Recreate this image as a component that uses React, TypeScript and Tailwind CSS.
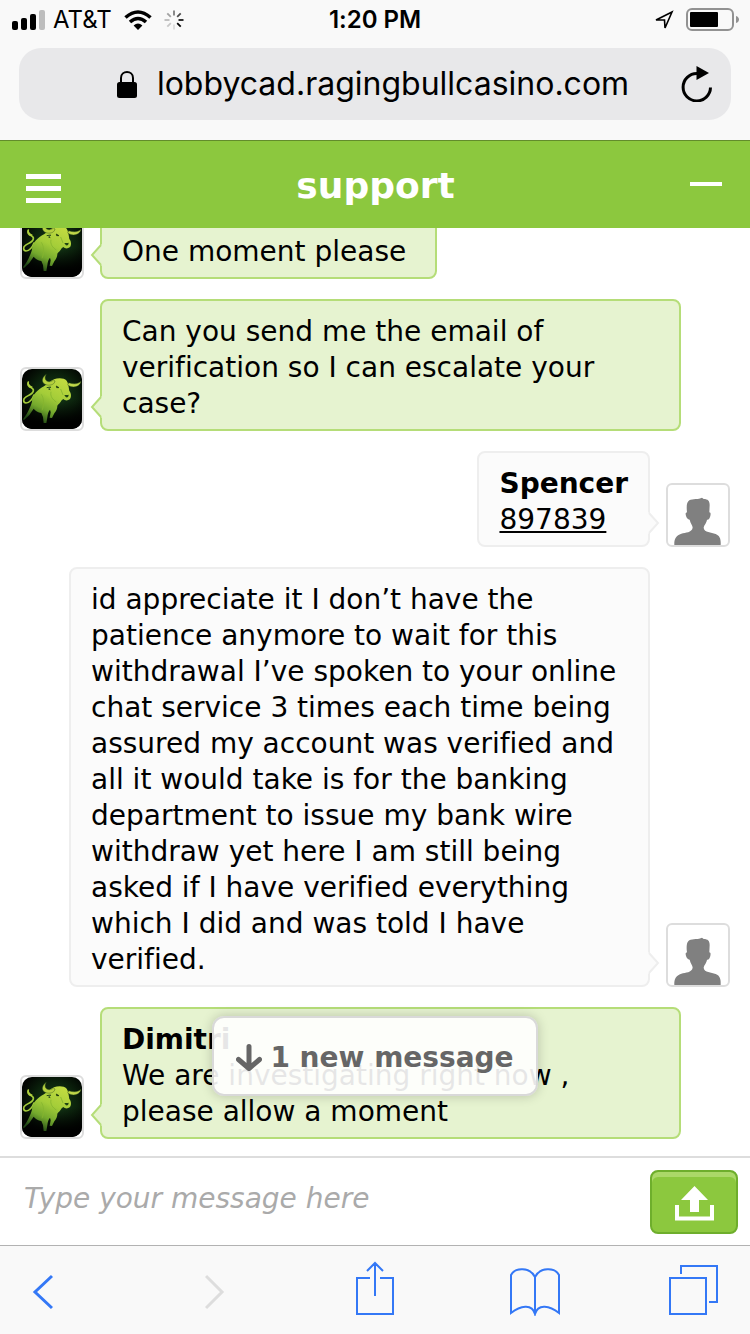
import type { ReactNode } from 'react';

function BullAvatar() {
  return (
    <div className="size-16 shrink-0 rounded-md border-2 border-[#dddddd] bg-white">
      <svg viewBox="0 0 180 180" className="block size-full" role="img" aria-label="Agent">
        <defs>
          <radialGradient id="bg" cx="0.55" cy="0.45" r="0.6">
            <stop offset="0" stopColor="#17401a" />
            <stop offset="0.6" stopColor="#0b220c" />
            <stop offset="1" stopColor="#020502" />
          </radialGradient>
          <linearGradient id="floor" x1="0" y1="0" x2="0" y2="1">
            <stop offset="0.5" stopColor="#000" stopOpacity="0" />
            <stop offset="0.9" stopColor="#000" stopOpacity="1" />
          </linearGradient>
          <linearGradient id="hide" gradientUnits="userSpaceOnUse" x1="110" y1="30" x2="50" y2="160">
            <stop offset="0" stopColor="#c0da40" />
            <stop offset="0.4" stopColor="#a4cd39" />
            <stop offset="0.7" stopColor="#74a92d" />
            <stop offset="1" stopColor="#1d4414" />
          </linearGradient>
        </defs>
        <rect width="180" height="180" rx="30" fill="url(#bg)" />
        <rect width="180" height="180" rx="30" fill="url(#floor)" />
        <path
          d="M36 78C32 90 22 102 12 102C3 101 3 90 10 85C18 79 32 76 34 66C36 57 26 57 21 52C16 47 17 43 19 39"
          fill="none"
          stroke="#a3ca3a"
          strokeWidth="5"
          strokeLinecap="round"
        />
        <path d="M17 38C16 46 20 54 28 58L32 53C25 51 21 45 19 38Z" fill="#b3d340" />
        <path
          d="M30 98C30 76 48 62 66 52C76 45 84 36 96 31C108 26 126 26 134 35C139 42 140 54 142 66C148 72 149 86 143 91C137 96 128 95 124 90L119 94C115 102 109 106 106 110C106 118 103 126 97 133L90 147L83 146L86 130L84 122C79 127 77 135 76 145L73 162L65 162L63 144L58 132C48 130 40 125 35 119C30 125 26 132 22 138L6 153L3 151L14 135C20 124 26 112 30 98Z"
          fill="url(#hide)"
        />
        <path
          d="M73 16C57 27 57 44 75 48C88 50 98 45 99 36L94 33C88 39 77 40 72 34C68 29 69 22 73 16Z"
          fill="#b6d03e"
          stroke="#24481a"
          strokeWidth="1.200"
        />
        <path
          d="M137 48C152 59 174 54 177 37C169 46 154 46 140 41Z"
          fill="#c0d749"
          stroke="#24481a"
          strokeWidth="1.200"
        />
        <path d="M74 56L86 54L82 59M79 60L85 62" fill="none" stroke="#24481a" strokeWidth="3" />
        <path d="M103 51L111 56L104 56Z" fill="#17340d" stroke="#17340d" strokeWidth="2" />
        <path d="M127 79C131 76 134 80 140 77C140 82 137 87 132 85Z" fill="#1f4512" />
        <path d="M87 68C84 82 92 92 103 99M116 60L123 78" fill="none" stroke="#86b52f" strokeWidth="2.500" />
        <path d="M58 76C66 88 67 106 60 124" fill="none" stroke="#86b52f" strokeWidth="2.500" />
      </svg>
    </div>
  );
}

function VisitorAvatar() {
  return (
    <div className="size-16 shrink-0 rounded-md border-2 border-[#dddddd] bg-white">
      <svg viewBox="0 0 180 180" className="block size-full" role="img" aria-label="Visitor">
        <path
          d="M19 180C18 162 24 151 40 146C53 142 71 143 74 128C74 120 67 115 65 104C58 104 54 96 53 88C52 84 55 83 57 82C55 63 56 51 64 46C74 40 92 44 102 38L107 42C120 42 125 48 125 60L124 82C129 83 128 88 127 93C125 101 122 105 117 104C115 116 107 121 107 129C109 143 130 142 143 147C156 152 159 163 158 180Z"
          fill="#808080"
        />
      </svg>
    </div>
  );
}

function AgentMessage({ children }: { children: ReactNode }) {
  return (
    <li className="flex shrink-0 items-end gap-4">
      <BullAvatar />
      <div className="relative max-w-[581px] rounded-lg border-2 border-[#b5dd78] bg-[#e6f3d0] px-5 pt-[13px] pb-[7px]">
        {children}
        <svg viewBox="0 0 12 22" className="absolute -left-3 bottom-[11px] h-[22px] w-3" aria-hidden="true">
          <path d="M12 0L2 11L12 22Z" fill="#e6f3d0" />
          <path d="M11 1L2 11L11 21" fill="none" stroke="#b5dd78" strokeWidth="2" />
        </svg>
      </div>
    </li>
  );
}

function VisitorMessage({ children }: { children: ReactNode }) {
  return (
    <li className="flex shrink-0 items-end justify-end gap-4">
      <div className="relative max-w-[581px] rounded-lg border-2 border-[#eeeeee] bg-[#fbfbfb] px-5 pt-[13px] pb-[7px]">
        {children}
        <svg viewBox="0 0 12 22" className="absolute -right-3 bottom-[11px] h-[22px] w-3" aria-hidden="true">
          <path d="M0 0L10 11L0 22Z" fill="#fbfbfb" />
          <path d="M1 1L10 11L1 21" fill="none" stroke="#eeeeee" strokeWidth="2" />
        </svg>
      </div>
      <VisitorAvatar />
    </li>
  );
}

function StatusBar() {
  const rays = [0.5, 0.7, 0.9, 1, 0.12, 0.2, 0.25, 0.35];
  return (
    <div className="grid h-10 grid-cols-3 items-center px-3 text-[24px] leading-10">
      <div className="flex items-center gap-2">
        <svg viewBox="0 0 33 20" className="h-5 w-[33px]" aria-label="Signal">
          <rect x="0" y="11" width="6" height="9" rx="2" />
          <rect x="9" y="8" width="6" height="12" rx="2" />
          <rect x="18" y="4" width="6" height="16" rx="2" />
          <rect x="27" y="0" width="6" height="20" rx="2" fill="#bdbdbd" />
        </svg>
        <span>AT&amp;T</span>
        <svg viewBox="0 0 28 20" className="ml-1 h-5 w-7" aria-label="Wi-Fi">
          <path d="M1.500 7.500Q14-3.500 26.500 7.500M6 12Q14 5 22 12" fill="none" stroke="#000" strokeWidth="3.600" />
          <path d="M9.600 15.400Q14 11.600 18.400 15.400L14 20Z" />
        </svg>
        <svg viewBox="-10 -10 20 20" className="ml-1 size-5" aria-label="Loading">
          {rays.map((o, i) => (
            <path key={i} d="M0-4.500V-9.500" stroke="#000" strokeOpacity={o} strokeWidth="1.800" transform={`rotate(${i * 45})`} />
          ))}
        </svg>
      </div>
      <time className="text-center font-semibold">1:20 PM</time>
      <div className="flex items-center justify-end gap-3">
        <svg viewBox="0 0 20 20" className="size-5" aria-label="Location">
          <path d="M2 10L18 2L11 18L10.500 10Z" fill="none" stroke="#000" strokeWidth="1.600" />
        </svg>
        <svg viewBox="0 0 54 24" className="-mr-0.5 h-6 w-[54px]" aria-label="Battery">
          <rect x="1" y="1" width="46" height="21" rx="5" fill="none" stroke="#929292" strokeWidth="2" />
          <rect x="4" y="4" width="28" height="15" rx="1" />
          <path d="M50 8C54 9 54 14 50 15Z" fill="#929292" />
        </svg>
      </div>
    </div>
  );
}

export default function App() {
  return (
    <div className="flex h-screen flex-col overflow-hidden bg-white font-['DejaVu_Sans',sans-serif] text-[28px] leading-9 text-black [font-variant-ligatures:none]">
      <div className="shrink-0 bg-[#f9f9f9] pb-5 font-['Inter',sans-serif]">
        <StatusBar />
        <div className="mx-[19px] mt-2 flex h-18 items-center rounded-[22px] bg-[#e8e8ea] px-4">
          <div className="flex flex-1 items-center justify-center gap-5 pl-8">
            <svg viewBox="0 0 20 27" className="h-[27px] w-5" aria-label="Secure">
              <path d="M4 13V7C4-1 16-1 16 7V13" fill="none" stroke="#000" strokeWidth="2" />
              <rect y="11" width="20" height="16" rx="2.500" />
            </svg>
            <span className="text-[32px] leading-10">lobbycad.ragingbullcasino.com</span>
          </div>
          <button type="button" aria-label="Reload" className="flex h-10 w-9 items-center justify-center">
            <svg viewBox="0 0 32 36" className="h-9 w-8">
              <path d="M29.500 21.500A13.700 13.700 0 1 1 16 7.500" fill="none" stroke="#000" strokeWidth="3" />
              <path d="M15.500 0L28 7L15.500 14Z" />
            </svg>
          </button>
        </div>
      </div>

      <header className="flex h-22 shrink-0 items-center justify-between border-t border-[#628c2b] bg-[#8cc83e] pr-7 pl-[26px] text-white">
        <button type="button" aria-label="Menu" className="flex flex-col gap-[7px] pt-2">
          <span className="h-[5px] w-[35px] bg-white" />
          <span className="h-[5px] w-[35px] bg-white" />
          <span className="h-[5px] w-[35px] bg-white" />
        </button>
        <h1 className="pt-0.5 text-[36px] leading-10 font-bold">support</h1>
        <button type="button" aria-label="Minimize" className="flex h-9 items-center pb-0.5">
          <span className="h-1 w-8 bg-white" />
        </button>
      </header>

      <main className="relative flex min-h-0 flex-1 flex-col">
        <ul className="flex min-h-0 flex-1 flex-col justify-end gap-5 overflow-hidden px-5 pb-[17px]">
          <AgentMessage>
            <p>One moment please&nbsp;</p>
          </AgentMessage>
          <AgentMessage>
            <p>Can you send me the email of verification so I can escalate your case?</p>
          </AgentMessage>
          <VisitorMessage>
            <p className="font-bold">Spencer</p>
            <a href="tel:897839" className="block underline decoration-2 underline-offset-2">
              897839
            </a>
          </VisitorMessage>
          <VisitorMessage>
            <p>
              id appreciate it I don’t have the patience anymore to wait for this withdrawal I’ve spoken to your online
              chat service 3 times each time being assured my account was verified and all it would take is for the
              banking department to issue my bank wire withdraw yet here I am still being asked if I have verified
              everything which I did and was told I have verified.
            </p>
          </VisitorMessage>
          <AgentMessage>
            <p className="font-bold">Dimitri</p>
            <p>We are investigating right now , please allow a moment</p>
          </AgentMessage>
        </ul>
        <div className="pointer-events-none absolute inset-x-0 bottom-[60px] flex justify-center">
          <button
            type="button"
            className="pointer-events-auto flex h-20 items-center gap-2 rounded-xl border-2 border-[#d9d9d9] bg-white/90 px-[22px] pt-1 font-bold text-[#666666] shadow-[0_0_12px_rgba(0,0,0,0.2)]"
          >
            <svg viewBox="0 0 26 28" className="h-7 w-[26px]" aria-hidden="true">
              <path
                d="M13 2.500V24M2.500 15.500L13 24.500L23.500 15.500"
                fill="none"
                stroke="#666666"
                strokeWidth="5"
                strokeLinecap="round"
                strokeLinejoin="round"
              />
            </svg>
            1 new message
          </button>
        </div>
      </main>

      <form className="flex h-[89px] shrink-0 items-center border-t-2 border-[#dddddd] bg-white pr-3 pl-6">
        <input
          type="text"
          aria-label="Message"
          placeholder="Type your message here"
          className="min-w-0 flex-1 bg-transparent pb-1.5 font-['DejaVu_Sans',sans-serif] text-[28px] leading-9 italic outline-none placeholder:text-[#aaaaaa]"
        />
        <button
          type="button"
          aria-label="Upload"
          className="flex h-16 w-22 items-center justify-center rounded-lg border-2 border-[#6eae2c] bg-[#8cc83e] shadow-[inset_0_5px_0_#abd868]"
        >
          <svg viewBox="0 0 39 35" className="mt-1 h-[35px] w-[39px]" aria-hidden="true">
            <path d="M19.500 0L33 14H24V26H15V14H6Z" fill="#fff" />
            <path d="M2 19V32.500H37V19" fill="none" stroke="#fff" strokeWidth="4" />
          </svg>
        </button>
      </form>

      <nav className="flex h-[89px] shrink-0 items-center justify-between border-t border-[#b2b2b2] bg-[#f9f9f9] px-[31px]">
        <button type="button" aria-label="Back" className="flex w-[50px] justify-start pt-1">
          <svg viewBox="0 0 22 38" className="h-[38px] w-[22px]">
            <path d="M21 3L4 19L21 35" fill="none" stroke="#3478f6" strokeWidth="3" />
          </svg>
        </button>
        <button type="button" aria-label="Forward" disabled className="flex w-[50px] justify-center pt-1">
          <svg viewBox="0 0 22 38" className="h-[38px] w-[22px]">
            <path d="M1 3L17 19L1 35" fill="none" stroke="#dddddd" strokeWidth="3" />
          </svg>
        </button>
        <button type="button" aria-label="Share" className="flex w-[50px] justify-center pb-1">
          <svg viewBox="0 0 38 54" className="h-[54px] w-[38px]">
            <path
              d="M14 17H1V53H37V17H24M19 35V2M11 10L19 2L27 10"
              fill="none"
              stroke="#3478f6"
              strokeWidth="2"
            />
          </svg>
        </button>
        <button type="button" aria-label="Bookmarks" className="flex w-[50px] justify-center pt-1">
          <svg viewBox="0 0 50 48" className="h-12 w-[50px]">
            <path
              d="M25 46V9C20-1 5-1 1 7V45C10 38 22 35 25 46C28 35 40 38 49 45V7C45-1 30-1 25 9"
              fill="none"
              stroke="#3478f6"
              strokeWidth="2"
            />
          </svg>
        </button>
        <button type="button" aria-label="Tabs" className="flex w-[50px] justify-center">
          <svg viewBox="0 0 50 50" className="size-[50px]">
            <path d="M1 13H37V49H1ZM12 9V1H48V37H40" fill="none" stroke="#3478f6" strokeWidth="2" />
          </svg>
        </button>
      </nav>
    </div>
  );
}
